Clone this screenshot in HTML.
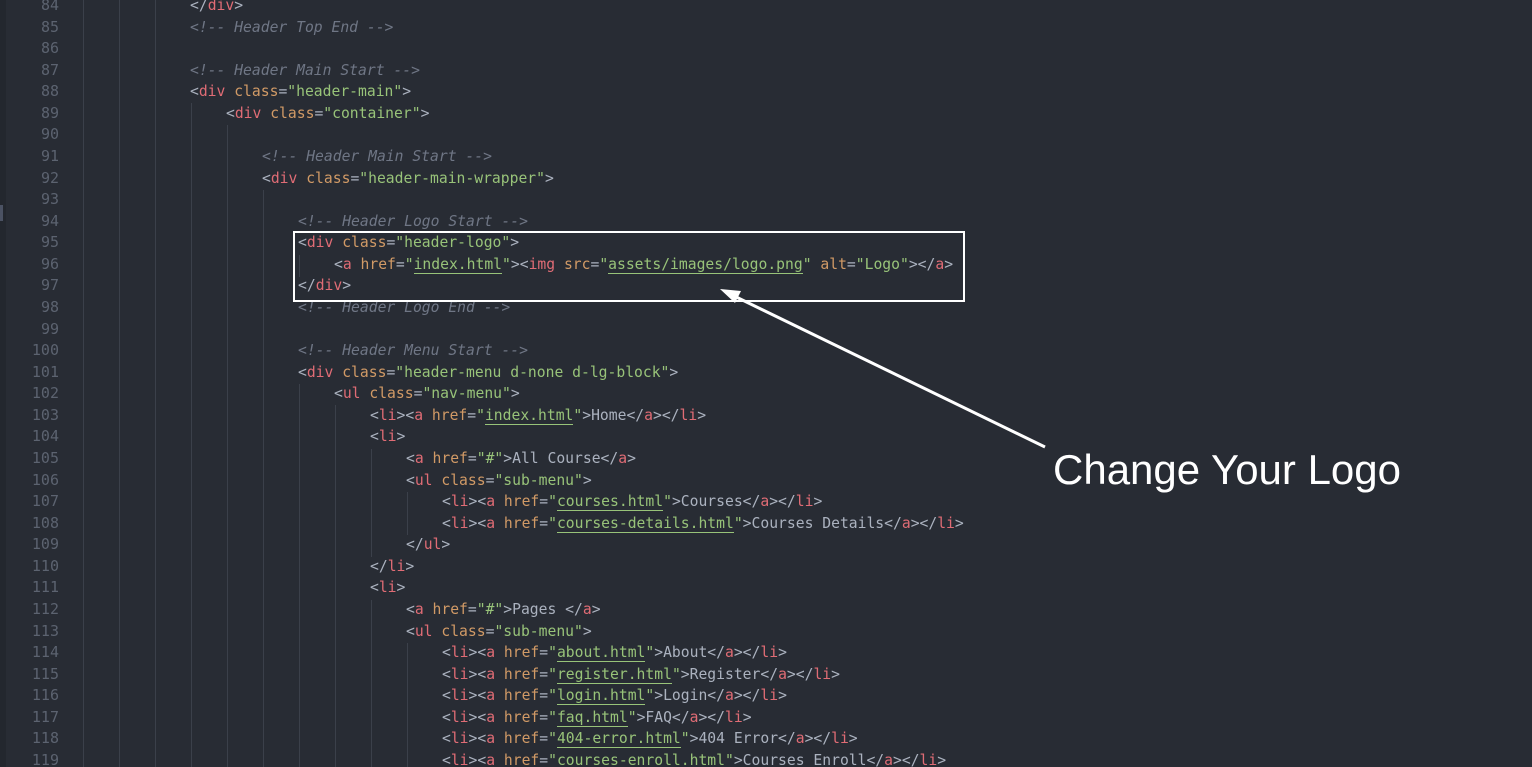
<!DOCTYPE html>
<html><head><meta charset="utf-8"><style>
html,body{margin:0;padding:0;width:1532px;height:767px;overflow:hidden;background:#282c34;}
#w{position:relative;width:1532px;height:767px;background:#282c34;}
.ln{position:absolute;left:0;width:59px;text-align:right;color:#5c6370;font:15px/21.57px "DejaVu Sans Mono","Liberation Mono",monospace;}
.c{position:absolute;left:46px;white-space:pre;color:#abb2bf;font:14.7px/21.57px "DejaVu Sans Mono","Liberation Mono",monospace;}
.t{color:#e06c75}.a{color:#d19a66}.s{color:#98c379}.u{color:#98c379;border-bottom:1px solid #98c379}
.m{color:#6f7685;font-style:italic}
.g{position:absolute;width:1px;background:#3b404a;}
</style></head><body><div id="w">
<div style="position:absolute;left:0;top:0;width:6px;height:767px;background:#23272e"></div>
<div style="position:absolute;left:0;top:205px;width:3px;height:16px;background:#4b5263"></div>
<div class="g" style="left:83px;top:0;height:767px"></div>
<div class="g" style="left:119px;top:0;height:767px"></div>
<div class="g" style="left:155px;top:0;height:767px"></div>
<div class="g" style="left:191px;top:103px;height:664px"></div>
<div class="g" style="left:227px;top:125px;height:642px"></div>
<div class="g" style="left:263px;top:190px;height:577px"></div>
<div class="g" style="left:299px;top:255px;height:22px"></div>
<div class="g" style="left:299px;top:384px;height:383px"></div>
<div class="g" style="left:335px;top:405px;height:362px"></div>
<div class="g" style="left:371px;top:449px;height:108px"></div>
<div class="g" style="left:371px;top:600px;height:167px"></div>
<div class="g" style="left:407px;top:492px;height:43px"></div>
<div class="g" style="left:407px;top:643px;height:124px"></div>
<div id="code"></div>
<div style="position:absolute;left:293px;top:231px;width:668px;height:67px;border:2px solid #fff"></div>
<svg style="position:absolute;left:0;top:0" width="1532" height="767"><line x1="1045" y1="447" x2="730" y2="294" stroke="#fff" stroke-width="3"/><polygon points="720,289 741,291 735,303" fill="#fff"/></svg>
<div style="position:absolute;left:1053px;top:444px;color:#fff;font:42px/52px 'Liberation Sans',sans-serif;letter-spacing:0px">Change Your Logo</div>
</div>
<script>
const L=[
[84,4,'&lt;/<span class="t">div</span>&gt;'],
[85,4,'<span class="m">&lt;!-- Header Top End --&gt;</span>'],
[86,0,''],
[87,4,'<span class="m">&lt;!-- Header Main Start --&gt;</span>'],
[88,4,'&lt;<span class="t">div</span> <span class="a">class</span>=<span class="s">"header-main"</span>&gt;'],
[89,5,'&lt;<span class="t">div</span> <span class="a">class</span>=<span class="s">"container"</span>&gt;'],
[90,0,''],
[91,6,'<span class="m">&lt;!-- Header Main Start --&gt;</span>'],
[92,6,'&lt;<span class="t">div</span> <span class="a">class</span>=<span class="s">"header-main-wrapper"</span>&gt;'],
[93,0,''],
[94,7,'<span class="m">&lt;!-- Header Logo Start --&gt;</span>'],
[95,7,'&lt;<span class="t">div</span> <span class="a">class</span>=<span class="s">"header-logo"</span>&gt;'],
[96,8,'&lt;<span class="t">a</span> <span class="a">href</span>=<span class="s">"</span><span class="u">index.html</span><span class="s">"</span>&gt;&lt;<span class="t">img</span> <span class="a">src</span>=<span class="s">"</span><span class="u">assets/images/logo.png</span><span class="s">"</span> <span class="a">alt</span>=<span class="s">"Logo"</span>&gt;&lt;/<span class="t">a</span>&gt;'],
[97,7,'&lt;/<span class="t">div</span>&gt;'],
[98,7,'<span class="m">&lt;!-- Header Logo End --&gt;</span>'],
[99,0,''],
[100,7,'<span class="m">&lt;!-- Header Menu Start --&gt;</span>'],
[101,7,'&lt;<span class="t">div</span> <span class="a">class</span>=<span class="s">"header-menu d-none d-lg-block"</span>&gt;'],
[102,8,'&lt;<span class="t">ul</span> <span class="a">class</span>=<span class="s">"nav-menu"</span>&gt;'],
[103,9,'&lt;<span class="t">li</span>&gt;&lt;<span class="t">a</span> <span class="a">href</span>=<span class="s">"</span><span class="u">index.html</span><span class="s">"</span>&gt;Home&lt;/<span class="t">a</span>&gt;&lt;/<span class="t">li</span>&gt;'],
[104,9,'&lt;<span class="t">li</span>&gt;'],
[105,10,'&lt;<span class="t">a</span> <span class="a">href</span>=<span class="s">"#"</span>&gt;All Course&lt;/<span class="t">a</span>&gt;'],
[106,10,'&lt;<span class="t">ul</span> <span class="a">class</span>=<span class="s">"sub-menu"</span>&gt;'],
[107,11,'&lt;<span class="t">li</span>&gt;&lt;<span class="t">a</span> <span class="a">href</span>=<span class="s">"</span><span class="u">courses.html</span><span class="s">"</span>&gt;Courses&lt;/<span class="t">a</span>&gt;&lt;/<span class="t">li</span>&gt;'],
[108,11,'&lt;<span class="t">li</span>&gt;&lt;<span class="t">a</span> <span class="a">href</span>=<span class="s">"</span><span class="u">courses-details.html</span><span class="s">"</span>&gt;Courses Details&lt;/<span class="t">a</span>&gt;&lt;/<span class="t">li</span>&gt;'],
[109,10,'&lt;/<span class="t">ul</span>&gt;'],
[110,9,'&lt;/<span class="t">li</span>&gt;'],
[111,9,'&lt;<span class="t">li</span>&gt;'],
[112,10,'&lt;<span class="t">a</span> <span class="a">href</span>=<span class="s">"#"</span>&gt;Pages &lt;/<span class="t">a</span>&gt;'],
[113,10,'&lt;<span class="t">ul</span> <span class="a">class</span>=<span class="s">"sub-menu"</span>&gt;'],
[114,11,'LI:about.html:About'],
[115,11,'LI:register.html:Register'],
[116,11,'LI:login.html:Login'],
[117,11,'LI:faq.html:FAQ'],
[118,11,'LI:404-error.html:404 Error'],
[119,11,'LI:courses-enroll.html:Courses Enroll']
];
let h='';
L.forEach(([n,ind,c])=>{
 if(c.startsWith('LI:')){const p=c.split(':');c='&lt;<span class="t">li</span>&gt;&lt;<span class="t">a</span> <span class="a">href</span>=<span class="s">"</span><span class="u">'+p[1]+'</span><span class="s">"</span>&gt;'+p[2]+'&lt;/<span class="t">a</span>&gt;&lt;/<span class="t">li</span>&gt;';}
 const top=(n-84)*21.57-5;
 h+='<div class="ln" style="top:'+top+'px">'+n+'</div>';
 h+='<div class="c" style="top:'+top+'px;left:'+(46+ind*36)+'px">'+c+'</div>';
});
document.getElementById('code').innerHTML=h;
</script>
</body></html>
